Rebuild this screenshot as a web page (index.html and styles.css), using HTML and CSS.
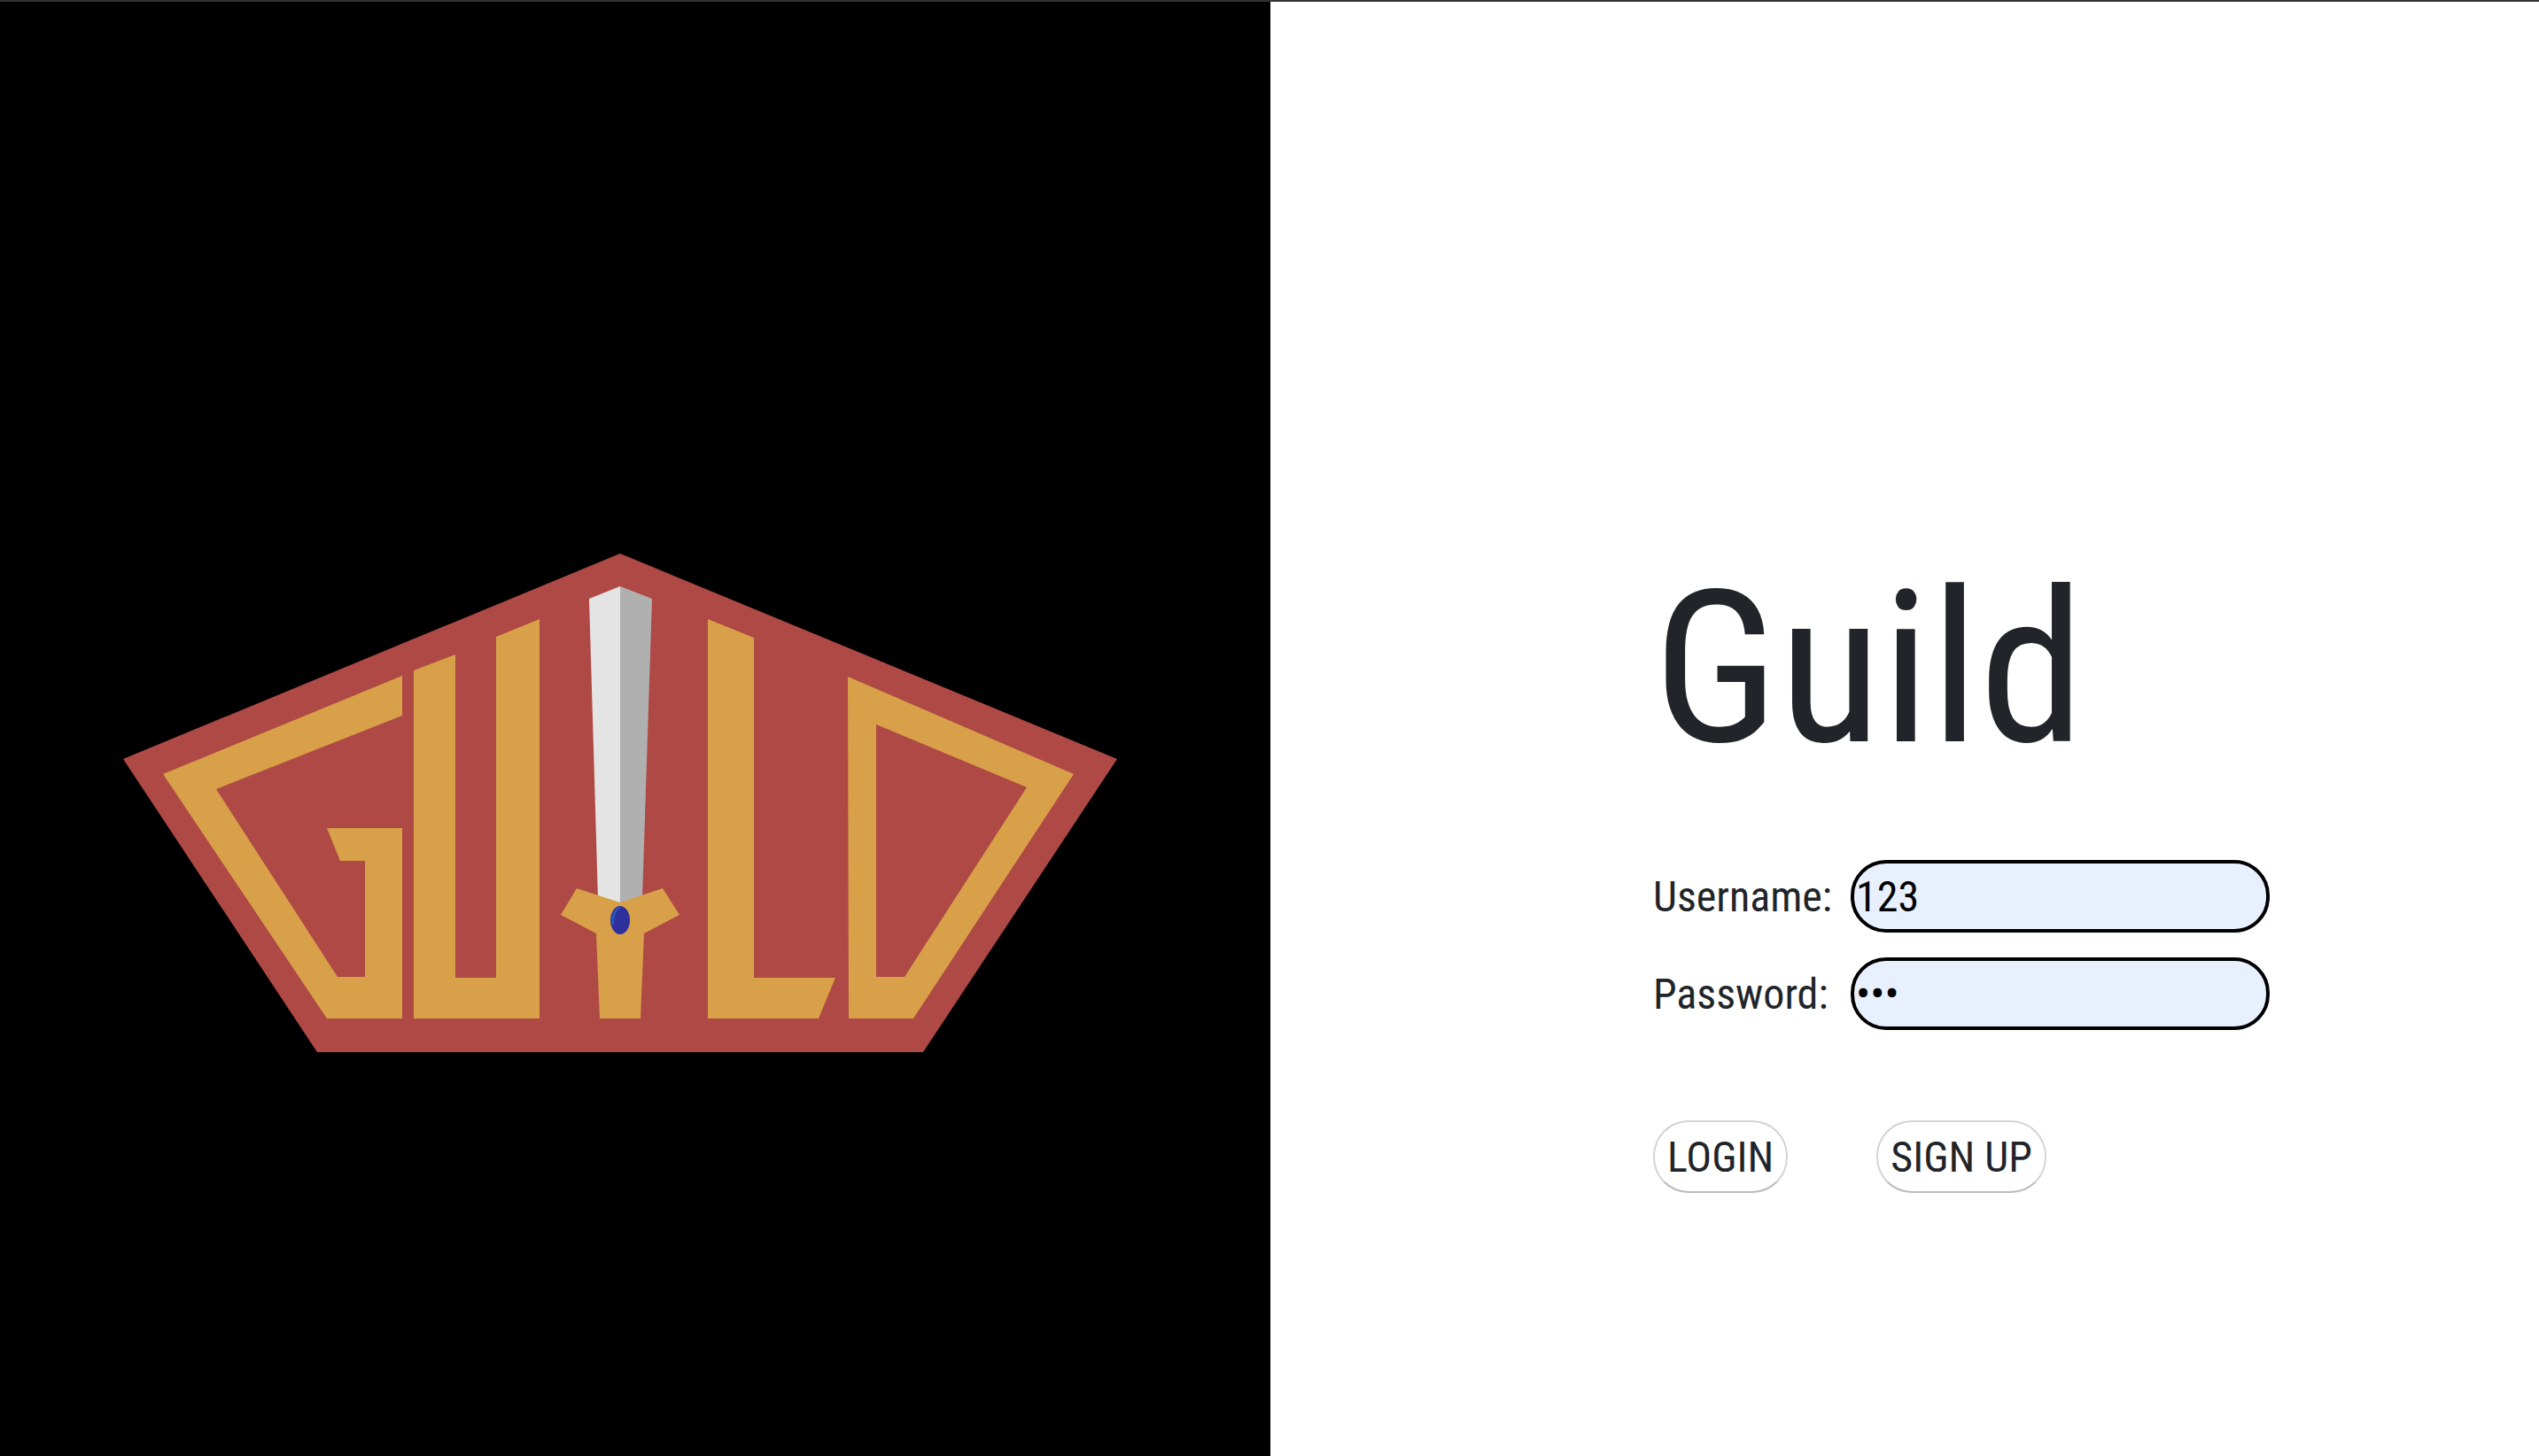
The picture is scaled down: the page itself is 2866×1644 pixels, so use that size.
FILE: index.html
```html
<!DOCTYPE html>
<html lang="en">
<head>
    <meta charset="UTF-8">
    <title>Guild</title>
    <link rel="stylesheet" href="styles.css">
</head>
<body>
    <div class="page">
        <div class="logo-panel">
            <svg class="logo" viewBox="0 2 1434 1642" xmlns="http://www.w3.org/2000/svg">
                <polygon class="shield" points="700,625 1261,857 1042,1188 358,1188 139,857"/>
                <!-- letters -->
                <polygon class="gold" points="454,763 184,874 369,1150 454,1150 454,935 369,935 384,972 412,972 412,1103 381,1103 244,891 454,808"/>
                <polygon class="gold" points="467,757 514,739 514,1104 560,1104 560,719 609,699 609,1150 467,1150"/>
                <polygon class="gold" points="799,699 851,720 851,1104 943,1104 924,1150 799,1150"/>
                <path class="gold" fill-rule="evenodd" d="M957,764 L1212,874 L1031,1150 L958,1150 Z M989,818 L989,1103 L1021,1103 L1159,889 Z"/>
                <!-- sword -->
                <polygon class="blade-light" points="700,662 665,676 675,1015 700,1023"/>
                <polygon class="blade-dark" points="700,662 736,676 725,1015 700,1023"/>
                <polygon class="gold" points="651,1003 700,1019 748,1003 767,1033 727,1054 723,1150 677,1150 673,1054 633,1033"/>
                <ellipse class="gem" cx="700" cy="1039" rx="11" ry="16"/>
                <path class="gem-shine" d="M691,1045 C688,1034 693,1024 702,1024 C696,1027 693,1034 693,1045 Z"/>
            </svg>
        </div>
        <div class="login-panel">
            <h1 class="title">Guild</h1>
            <form class="login-form">
                <div class="field">
                    <label for="username">Username:</label>
                    <input type="text" id="username" value="123">
                </div>
                <div class="field">
                    <label for="password">Password:</label>
                    <input type="password" id="password" value="123">
                </div>
                <div class="actions">
                    <button type="button" class="button">LOGIN</button>
                    <button type="button" class="button">SIGN UP</button>
                </div>
            </form>
        </div>
    </div>
</body>
</html>
```

FILE: styles.css
```css
html, body {
    height: 100%;
}
body {
    margin: 0;
    font-family: "Roboto", sans-serif;
    font-stretch: condensed;
    color: #212529;
    background: #fff;
    border-top: 2px solid #333;
    box-sizing: border-box;
    overflow: hidden;
}
.page {
    display: flex;
    height: 100%;
}
.logo-panel {
    width: 1434px;
    background: #000;
}
.logo {
    display: block;
    width: 100%;
    height: 100%;
}
.shield {
    fill: #af4945;
}
.gold {
    fill: #d8a048;
}
.blade-light {
    fill: #e4e4e4;
}
.blade-dark {
    fill: #b0b0b0;
}
.gem {
    fill: #2e309c;
}
.gem-shine {
    fill: #2a55b8;
}
.login-panel {
    flex: 1;
    padding-left: 432px;
    padding-top: 609px;
}
.title {
    margin: 0 0 72px;
    font-size: 240px;
    font-weight: 400;
    line-height: 1.2;
    font-stretch: condensed;
}
.field {
    display: flex;
    align-items: center;
    margin-bottom: 28px;
}
.field label {
    width: 223px;
    font-size: 48px;
}
.field input {
    width: 473px;
    height: 82px;
    box-sizing: border-box;
    padding: 0 2px;
    border: 4px solid #000;
    border-radius: 40px;
    background: #e8f0fe;
    font-family: inherit;
    font-stretch: condensed;
    font-size: 48px;
    color: #000;
    outline: none;
}
.actions {
    display: flex;
    gap: 100px;
    margin-top: 102px;
}
.button {
    height: 82px;
    padding: 0 14px;
    border: 2px solid #d4d4d4;
    border-bottom-color: #bbb;
    border-radius: 40px;
    background: #fff;
    font-family: inherit;
    font-stretch: condensed;
    font-size: 48px;
    color: #212529;
}
```
